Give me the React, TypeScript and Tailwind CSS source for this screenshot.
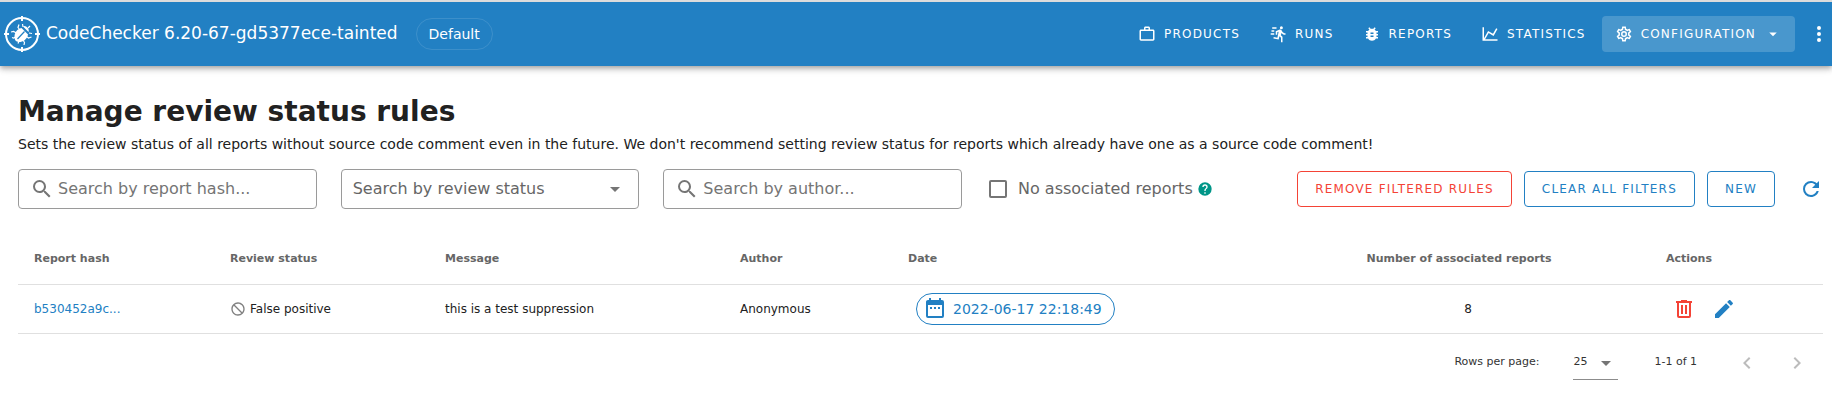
import React from "react";

const icons = {
  magnify:
    "M9.5,3A6.5,6.5 0 0,1 16,9.5C16,11.11 15.41,12.59 14.44,13.73L14.71,14H15.5L20.5,19L19,20.5L14,15.5V14.71L13.73,14.44C12.59,15.41 11.11,16 9.5,16A6.5,6.5 0 0,1 3,9.5A6.5,6.5 0 0,1 9.5,3M9.5,5C7,5 5,7 5,9.5C5,12 7,14 9.5,14C12,14 14,12 14,9.5C14,7 12,5 9.5,5Z",
  menuDown: "M7,10L12,15L17,10H7Z",
  briefcase:
    "M20,6C20.58,6 21.05,6.2 21.42,6.59C21.8,7 22,7.45 22,8V19C22,19.55 21.8,20 21.42,20.41C21.05,20.8 20.58,21 20,21H4C3.42,21 2.95,20.8 2.58,20.41C2.2,20 2,19.55 2,19V8C2,7.45 2.2,7 2.58,6.59C2.95,6.2 3.42,6 4,6H8V4C8,3.42 8.2,2.95 8.58,2.58C8.95,2.2 9.42,2 10,2H14C14.58,2 15.05,2.2 15.42,2.58C15.8,2.95 16,3.42 16,4V6H20M4,8V19H20V8H4M14,6V4H10V6H14Z",
  runFast:
    "M16.5,5.5A2,2 0 0,0 18.5,3.5A2,2 0 0,0 16.5,1.5A2,2 0 0,0 14.5,3.5A2,2 0 0,0 16.5,5.5M12.9,19.4L13.9,15L16,17V23H18V15.5L15.9,13.5L16.5,10.5C17.89,12.09 19.89,13 22,13V11C20.24,11.03 18.6,10.11 17.7,8.6L16.7,7C16.34,6.4 15.7,6 15,6C14.7,6 14.5,6.1 14.2,6.1L9,8.3V13H11V9.6L12.8,8.9L11.2,17L6.3,16L5.9,18L12.9,19.4M4,9A1,1 0 0,1 3,8A1,1 0 0,1 4,7H7V9H4M5,5A1,1 0 0,1 4,4A1,1 0 0,1 5,3H10V5H5M3,13A1,1 0 0,1 2,12A1,1 0 0,1 3,11H7V13H3Z",
  bug: "M14,12H10V10H14M14,16H10V14H14M20,8H17.19C16.74,7.22 16.12,6.55 15.37,6.04L17,4.41L15.59,3L13.42,5.17C12.96,5.06 12.5,5 12,5C11.5,5 11.04,5.06 10.59,5.17L8.41,3L7,4.41L8.62,6.04C7.88,6.55 7.26,7.22 6.81,8H4V10H6.09C6.04,10.33 6,10.66 6,11V12H4V14H6V15C6,15.34 6.04,15.67 6.09,16H4V18H6.81C7.85,19.79 9.78,21 12,21C14.22,21 16.15,19.79 17.19,18H20V16H17.91C17.96,15.67 18,15.34 18,15V14H20V12H18V11C18,10.66 17.96,10.33 17.91,10H20V8Z",
  chartLine:
    "M16,11.78L20.24,4.45L21.97,5.45L16.74,14.5L10.23,10.75L5.46,19H22V21H2V3H4V17.54L9.5,8L16,11.78Z",
  cog: "M12,8A4,4 0 0,1 16,12A4,4 0 0,1 12,16A4,4 0 0,1 8,12A4,4 0 0,1 12,8M12,10A2,2 0 0,0 10,12A2,2 0 0,0 12,14A2,2 0 0,0 14,12A2,2 0 0,0 12,10M10,22C9.75,22 9.54,21.82 9.5,21.58L9.13,18.93C8.5,18.68 7.96,18.34 7.44,17.94L4.95,18.95C4.73,19.03 4.46,18.95 4.34,18.73L2.34,15.27C2.21,15.05 2.27,14.78 2.46,14.63L4.57,12.97L4.5,12L4.57,11L2.46,9.37C2.27,9.22 2.21,8.95 2.34,8.73L4.34,5.27C4.46,5.05 4.73,4.96 4.95,5.05L7.44,6.05C7.96,5.66 8.5,5.32 9.13,5.07L9.5,2.42C9.54,2.18 9.75,2 10,2H14C14.25,2 14.46,2.18 14.5,2.42L14.87,5.07C15.5,5.32 16.04,5.66 16.56,6.05L19.05,5.05C19.27,4.96 19.54,5.05 19.66,5.27L21.66,8.73C21.79,8.95 21.73,9.22 21.54,9.37L19.43,11L19.5,12L19.43,13L21.54,14.63C21.73,14.78 21.79,15.05 21.66,15.27L19.66,18.73C19.54,18.95 19.27,19.04 19.05,18.95L16.56,17.95C16.04,18.34 15.5,18.68 14.87,18.93L14.5,21.58C14.46,21.82 14.25,22 14,22H10M11.25,4L10.88,6.61C9.68,6.86 8.62,7.5 7.85,8.39L5.44,7.35L4.69,8.65L6.8,10.2C6.4,11.37 6.4,12.64 6.8,13.8L4.68,15.36L5.43,16.66L7.86,15.62C8.63,16.5 9.68,17.14 10.87,17.38L11.24,20H12.76L13.13,17.39C14.32,17.14 15.37,16.5 16.14,15.62L18.57,16.66L19.32,15.36L17.2,13.81C17.6,12.64 17.6,11.37 17.2,10.2L19.31,8.65L18.56,7.35L16.15,8.39C15.38,7.5 14.32,6.86 13.12,6.62L12.75,4H11.25Z",
  dotsVertical:
    "M12,16A2,2 0 0,1 14,18A2,2 0 0,1 12,20A2,2 0 0,1 10,18A2,2 0 0,1 12,16M12,10A2,2 0 0,1 14,12A2,2 0 0,1 12,14A2,2 0 0,1 10,12A2,2 0 0,1 12,10M12,4A2,2 0 0,1 14,6A2,2 0 0,1 12,8A2,2 0 0,1 10,6A2,2 0 0,1 12,4Z",
  refresh:
    "M17.65,6.35C16.2,4.9 14.21,4 12,4A8,8 0 0,0 4,12A8,8 0 0,0 12,20C15.73,20 18.84,17.45 19.73,14H17.65C16.83,16.33 14.61,18 12,18A6,6 0 0,1 6,12A6,6 0 0,1 12,6C13.66,6 15.14,6.69 16.22,7.78L13,11H20V4L17.65,6.35Z",
  help: "M15.07,11.25L14.17,12.17C13.45,12.89 13,13.5 13,15H11V14.5C11,13.39 11.45,12.39 12.17,11.67L13.41,10.41C13.78,10.05 14,9.55 14,9C14,7.89 13.1,7 12,7A2,2 0 0,0 10,9H8A4,4 0 0,1 12,5A4,4 0 0,1 16,9C16,9.88 15.64,10.67 15.07,11.25M13,19H11V17H13M12,2A10,10 0 0,0 2,12A10,10 0 0,0 12,22A10,10 0 0,0 22,12C22,6.47 17.5,2 12,2Z",
  calendar:
    "M9,10H7V12H9V10M13,10H11V12H13V10M17,10H15V12H17V10M19,3H18V1H16V3H8V1H6V3H5C3.89,3 3,3.9 3,5V19A2,2 0 0,0 5,21H19A2,2 0 0,0 21,19V5A2,2 0 0,0 19,3M19,19H5V8H19V19Z",
  trash:
    "M9,3V4H4V6H5V19A2,2 0 0,0 7,21H17A2,2 0 0,0 19,19V6H20V4H15V3H9M7,6H17V19H7V6M9,8V17H11V8H9M13,8V17H15V8H13Z",
  pencil:
    "M20.71,7.04C21.1,6.65 21.1,6 20.71,5.63L18.37,3.29C18,2.9 17.35,2.9 16.96,3.29L15.12,5.12L18.87,8.87M3,17.25V21H6.75L17.81,9.93L14.06,6.18L3,17.25Z",
  cancel:
    "M12 2C17.5 2 22 6.5 22 12S17.5 22 12 22 2 17.5 2 12 6.5 2 12 2M12 4C10.1 4 8.4 4.6 7.1 5.7L18.3 16.9C19.3 15.5 20 13.8 20 12C20 7.6 16.4 4 12 4M16.9 18.3L5.7 7.1C4.6 8.4 4 10.1 4 12C4 16.4 7.6 20 12 20C13.9 20 15.6 19.4 16.9 18.3Z",
  chevronLeft: "M15.41,16.58L10.83,12L15.41,7.41L14,6L8,12L14,18L15.41,16.58Z",
  chevronRight: "M8.59,16.58L13.17,12L8.59,7.41L10,6L16,12L10,18L8.59,16.58Z",
};

function Icon({ name, className = "size-6" }: { name: keyof typeof icons; className?: string }) {
  return (
    <svg viewBox="0 0 24 24" fill="currentColor" aria-hidden="true" className={`shrink-0 ${className}`}>
      <path d={icons[name]} />
    </svg>
  );
}

function Logo() {
  return (
    <svg viewBox="0 0 36 36" className="size-9 shrink-0" aria-hidden="true">
      <g fill="none" stroke="#fff">
        <circle cx="18" cy="18" r="16" strokeWidth="2" />
        <path strokeWidth="2" d="M18 0v5M18 31v5M0 18h5M31 18h5" />
        <path
          strokeWidth="1.2"
          d="M15.500 13.500L14 11.500l1-3M19 11l-.5-3M12.500 17l-3-1.500-2.500.5M12 21l-2.500 1-1.500-.5M22.500 20.500l2 1.500 3-1M25 17l3 .5M19 24l1.500 2.500-.5 2.500M15 25l-1 2.500M24 12l2-2"
        />
      </g>
      <path fill="#fff" d="M19 10.500c2-2 7 2 5.500 5.500z" />
      <path fill="#fff" d="M17.500 12l6.500 6.500c-1 5-5 7.500-9 7.500-3.500-.5-4.500-2-4.500-5.500 0-4 2.500-7.500 7-8.500z" />
      <path stroke="#2280c3" strokeWidth="1.2" d="M13.500 23l7-7.500" />
    </svg>
  );
}

const navItems: { label: string; icon: keyof typeof icons }[] = [
  { label: "Products", icon: "briefcase" },
  { label: "Runs", icon: "runFast" },
  { label: "Reports", icon: "bug" },
  { label: "Statistics", icon: "chartLine" },
];

function Header() {
  return (
    <header className="flex h-[66px] items-center border-t-2 border-[#dcdcdc] bg-[#2280c3] pl-1 text-white shadow-[0_2px_4px_-1px_rgba(0,0,0,0.2),0_4px_5px_0_rgba(0,0,0,0.14),0_1px_10px_0_rgba(0,0,0,0.12)]">
      <Logo />
      <span className="ml-1.5 whitespace-nowrap text-[17px]">CodeChecker 6.20-67-gd5377ece-tainted</span>
      <span className="ml-[18px] flex h-8 items-center rounded-full border border-white/12 px-3 text-sm">Default</span>
      <nav className="ml-auto flex items-center text-xs uppercase tracking-widest">
        {navItems.map((item) => (
          <a key={item.label} href="#" className="flex h-9 items-center gap-2 rounded pl-[13px] pr-4">
            <Icon name={item.icon} className="size-[18px]" />
            {item.label}
          </a>
        ))}
        <button
          type="button"
          className="flex h-9 items-center gap-2 rounded bg-white/18 px-[13px] uppercase tracking-widest"
        >
          <Icon name="cog" className="size-[18px]" />
          Configuration
          <Icon name="menuDown" className="size-[18px]" />
        </button>
      </nav>
      <button type="button" aria-label="More" className="ml-3 mr-px">
        <Icon name="dotsVertical" />
      </button>
    </header>
  );
}

function SearchField({ label }: { label: string }) {
  return (
    <label className="flex h-10 items-center gap-1 rounded border border-[#9a9a9a] px-[11px] text-[#757575]">
      <Icon name="magnify" />
      <input
        type="text"
        aria-label={label}
        placeholder={label}
        className="w-full min-w-0 bg-transparent text-base text-[#212121] outline-none placeholder:text-[#757575]"
      />
    </label>
  );
}

function Filters() {
  return (
    <div className="flex items-center">
      <div className="grid w-[52.3%] grid-cols-3 gap-6">
        <SearchField label="Search by report hash..." />
        <div className="grid h-10 items-center rounded border border-[#9a9a9a]">
          <select
            aria-label="Search by review status"
            className="col-start-1 row-start-1 h-full w-full appearance-none bg-transparent pl-[11px] pr-10 text-base text-[#666] outline-none"
          >
            <option>Search by review status</option>
          </select>
          <span className="pointer-events-none col-start-1 row-start-1 mr-[11px] justify-self-end text-[#757575]">
            <Icon name="menuDown" />
          </span>
        </div>
        <SearchField label="Search by author..." />
      </div>
      <div className="ml-[27px] flex items-center">
        <label className="flex items-center gap-[11px] whitespace-nowrap text-base text-[#666]">
          <input type="checkbox" className="size-[18px] appearance-none rounded-[2px] border-2 border-[#757575]" />
          No associated reports
        </label>
        <span className="ml-1 text-[#009688]">
          <Icon name="help" className="size-4" />
        </span>
      </div>
      <div className="ml-auto flex items-center gap-3 whitespace-nowrap text-xs text-[#2280c3]">
        <button
          type="button"
          className="h-9 rounded border border-[#f44336] px-[17px] uppercase tracking-widest text-[#f44336]"
        >
          Remove filtered rules
        </button>
        <button type="button" className="h-9 rounded border border-[#2280c3] px-[17px] uppercase tracking-widest">
          Clear all filters
        </button>
        <button type="button" className="h-9 rounded border border-[#2280c3] px-[17px] uppercase tracking-widest">
          New
        </button>
        <button type="button" aria-label="Refresh" className="ml-3">
          <Icon name="refresh" />
        </button>
      </div>
    </div>
  );
}

function RulesTable() {
  return (
    <table className="mt-[27px] w-full table-fixed border-collapse text-left text-xs text-[#212121]">
      <colgroup>
        <col className="w-[196px]" />
        <col className="w-[215px]" />
        <col className="w-[295px]" />
        <col className="w-[168px]" />
        <col />
        <col className="w-[364px]" />
        <col className="w-[173px]" />
      </colgroup>
      <thead className="text-[11px] text-[#666]">
        <tr className="h-12 border-b border-[#e0e0e0]">
          <th className="px-4">Report hash</th>
          <th className="px-4">Review status</th>
          <th className="px-4">Message</th>
          <th className="px-4">Author</th>
          <th className="px-4">Date</th>
          <th className="pl-4 pr-[34px] text-center">Number of associated reports</th>
          <th className="px-4">Actions</th>
        </tr>
      </thead>
      <tbody>
        <tr className="h-[49px] border-b border-[#e0e0e0]">
          <td className="px-4">
            <a href="#" className="text-[#2280c3]">b530452a9c...</a>
          </td>
          <td className="px-4">
            <span className="flex items-center gap-1">
              <span className="text-[#808080]">
                <Icon name="cancel" className="size-4" />
              </span>
              False positive
            </span>
          </td>
          <td className="px-4">this is a test suppression</td>
          <td className="px-4">Anonymous</td>
          <td className="px-4">
            <span className="ml-2 inline-flex h-8 items-center gap-1.5 whitespace-nowrap rounded-full border border-[#2280c3] pl-1.5 pr-3 align-middle text-sm text-[#2280c3]">
              <Icon name="calendar" />
              2022-06-17 22:18:49
            </span>
          </td>
          <td className="px-4 text-center">8</td>
          <td className="px-4">
            <span className="flex items-center gap-4 pl-1.5">
              <button type="button" aria-label="Remove rule" className="text-[#f44336]">
                <Icon name="trash" />
              </button>
              <button type="button" aria-label="Edit rule" className="text-[#2280c3]">
                <Icon name="pencil" />
              </button>
            </span>
          </td>
        </tr>
      </tbody>
    </table>
  );
}

function Pagination() {
  return (
    <div className="flex h-[58px] items-center justify-end pr-3.5 text-[11px] text-[#333]">
      <label htmlFor="rows-per-page">Rows per page:</label>
      <div className="ml-[34px] mt-0.5 grid h-8 w-[45px] items-center border-b border-[#8c8c8c]">
        <select
          id="rows-per-page"
          className="col-start-1 row-start-1 w-full appearance-none bg-transparent pb-0.5 outline-none"
        >
          <option>25</option>
        </select>
        <span className="pointer-events-none col-start-1 row-start-1 justify-self-end text-[#757575]">
          <Icon name="menuDown" />
        </span>
      </div>
      <span className="ml-9">1-1 of 1</span>
      <div className="ml-[38px] flex gap-[26px] text-[#bcbcbc]">
        <button type="button" aria-label="Previous page" disabled>
          <Icon name="chevronLeft" />
        </button>
        <button type="button" aria-label="Next page" disabled>
          <Icon name="chevronRight" />
        </button>
      </div>
    </div>
  );
}

export default function App() {
  return (
    <div className="min-h-screen bg-white font-['DejaVu_Sans',sans-serif]">
      <Header />
      <main className="pl-[18px] pr-[9px] pt-[26px] text-[#212121]">
        <h1 className="text-[28px] font-bold leading-10">Manage review status rules</h1>
        <p className="mb-[13px] text-sm leading-6">
          Sets the review status of all reports without source code comment even in the future. We don't recommend
          setting review status for reports which already have one as a source code comment!
        </p>
        <Filters />
        <RulesTable />
        <Pagination />
      </main>
    </div>
  );
}
